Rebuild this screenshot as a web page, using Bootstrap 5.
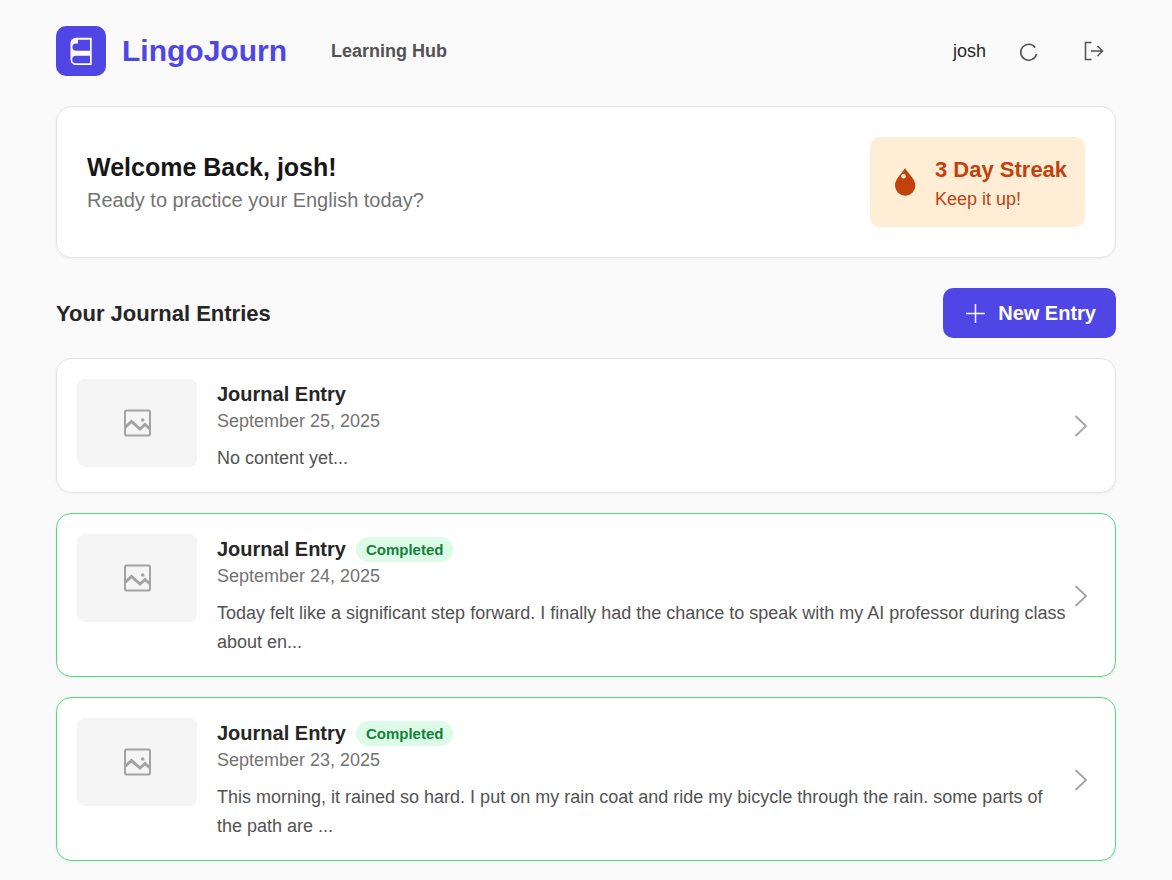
<!DOCTYPE html>
<html lang="en">
<head>
<meta charset="utf-8">
<meta name="viewport" content="width=device-width, initial-scale=1">
<title>LingoJourn</title>
<link href="https://cdn.jsdelivr.net/npm/bootstrap@5.3.0/dist/css/bootstrap.min.css" rel="stylesheet">
<style>
  body { font-family: "Liberation Sans", Arial, sans-serif; background: #fafafa; color: #262626; font-size: 18px; line-height: 25px; }
  a { text-decoration: none; color: inherit; }
  .page { max-width: 1320px; padding: 26px 56px 20px; }
  .site-header { margin-bottom: 30px; }
  .logo-tile { width: 50px; height: 50px; border-radius: 10px; background: #4f46e5; }
  .brand-name { font-size: 30px; line-height: 45px; padding-bottom: 2px; color: #4f46e5; }
  .hub-link { color: #525252; margin-left: 44px; }
  .user-actions { gap: 20px; }
  .icon-btn { width: 45px; height: 45px; padding: 0; border: 0; background: none; color: #525252; }
  .user-link { color: #262626; }
  .user-group { gap: 20px; }
  .panel { background: #fff; border: 1px solid #e5e5e5; border-radius: 15px; box-shadow: 0 1px 3px rgba(0,0,0,.05); }
  .welcome { padding: 30px; margin-bottom: 30px; }
  .welcome-title { font-size: 25px; line-height: 35px; color: #171717; }
  .welcome-text { font-size: 20px; line-height: 30px; color: #737373; }
  .streak { min-width: 215px; background: #ffedd5; color: #c2410c; border-radius: 10px; padding: 15px; gap: 10px; }
  .streak-icon { width: 40px; height: 40px; }
  .streak-title, .section-title { font-size: 22px; line-height: 35px; }
  .new-entry { background: #4f46e5; color: #fff; font-size: 20px; line-height: 30px; padding: 10px 20px; border: 0; border-radius: 10px; gap: 10px; }
  .new-entry:hover { background: #4338ca; color: #fff; }
  .entry-list { gap: 20px; margin-top: 20px; }
  .entry { padding: 20px 27px 19px 20px; }
  .entry.is-done { border-color: #4ade80; }
  .thumb { width: 120px; height: 88px; margin-right: 20px; border-radius: 8px; background: #f5f5f5; color: #a3a3a3; }
  .entry-title { font-size: 20px; line-height: 30px; }
  .done-tag { font-size: 15px; line-height: 19px; padding: 3px 10px; background: #dcfce7; color: #15803d; margin-left: 10px; }
  .entry-date { color: #737373; margin-bottom: 10px; }
  .entry-text { color: #525252; line-height: 29px; }
  .chevron { color: #a3a3a3; margin-left: 5px; }
</style>
</head>
<body>
<svg class="d-none" aria-hidden="true">
  <symbol id="i-image" viewBox="0 0 30 30">
    <rect x="3" y="2.500" width="25" height="25" rx="1.500" fill="none" stroke="currentColor" stroke-width="2"/>
    <path d="M3 19.500 9.500 13.500 18 21 23 16.500 28 21" fill="none" stroke="currentColor" stroke-width="3"/>
    <circle cx="20.700" cy="12" r="1.800" fill="currentColor"/>
  </symbol>
  <symbol id="i-chevron" viewBox="0 0 14 30">
    <path d="M1.500 5 12 15 1.500 25" fill="none" stroke="currentColor" stroke-width="1.800"/>
  </symbol>
</svg>
<div class="page container-fluid">
  <header class="site-header d-flex align-items-center justify-content-between">
    <nav class="d-flex align-items-center" aria-label="Main">
      <a href="#" class="d-flex align-items-center gap-3">
        <span class="logo-tile d-flex align-items-center justify-content-center">
          <svg width="34" height="36" viewBox="0 0 34 36" aria-hidden="true">
            <path fill="#fff" fill-rule="evenodd" d="M12 4.700H27.700V32H12a5.500 5.500 0 0 1-5.500-5.500V10.200A5.500 5.500 0 0 1 12 4.700ZM14 6.700V10.500H12A3.600 3.600 0 0 0 12 17.700H26V6.700ZM12 22.700A3.800 3.800 0 0 0 12 30.300H26V22.700Z"/>
          </svg>
        </span>
        <span class="brand-name fw-bold">LingoJourn</span>
      </a>
      <a href="#" class="hub-link fw-bold">Learning Hub</a>
    </nav>
    <div class="user-actions d-flex align-items-center">
      <a href="#" class="user-link">josh</a>
      <div class="user-group d-flex align-items-center">
        <button type="button" class="icon-btn d-flex align-items-center justify-content-center" aria-label="Refresh">
          <svg width="24" height="24" viewBox="0 0 24 24" fill="none" stroke="currentColor" stroke-width="1.500"><path d="M18.200 8.500A8 8 0 1 0 19.500 15"/></svg>
        </button>
        <button type="button" class="icon-btn d-flex align-items-center justify-content-center" aria-label="Sign out">
          <svg width="24" height="24" viewBox="0 0 24 24" fill="none" stroke="currentColor" stroke-width="1.500"><path d="M9.500 3.500H3.500V20.500H9.500M9 12H20.500M15.500 7 20.500 12 15.500 17"/></svg>
        </button>
      </div>
    </div>
  </header>

  <main>
    <section class="panel welcome d-flex align-items-center justify-content-between">
      <div>
        <h1 class="welcome-title fw-bold mb-0">Welcome Back, josh!</h1>
        <p class="welcome-text mb-0">Ready to practice your English today?</p>
      </div>
      <div class="streak d-flex align-items-center">
        <svg class="streak-icon" viewBox="0 0 40 40" aria-hidden="true">
          <path d="M20 6C17.500 11 10 16.500 10 23.500a10.200 10.200 0 0 0 20.400 0C30.400 16.500 22.500 11 20 6Z" fill="currentColor"/>
          <circle cx="18.500" cy="14.200" r="2.300" fill="#ffedd5"/>
        </svg>
        <div>
          <div class="streak-title fw-bold">3 Day Streak</div>
          <div>Keep it up!</div>
        </div>
      </div>
    </section>

    <div class="d-flex align-items-center justify-content-between">
      <h2 class="section-title fw-bold mb-0">Your Journal Entries</h2>
      <button type="button" class="new-entry btn fw-bold d-flex align-items-center">
        <svg width="25" height="25" viewBox="0 0 25 25" stroke="currentColor" stroke-width="1.500" aria-hidden="true"><path d="M12.500 3V22M3 12.500H22"/></svg>
        New Entry
      </button>
    </div>

    <div class="entry-list d-flex flex-column">
      <a href="#" class="panel entry d-flex">
        <span class="thumb flex-shrink-0 d-flex align-items-center justify-content-center"><svg width="30" height="30"><use href="#i-image"/></svg></span>
        <div class="flex-grow-1">
          <h3 class="entry-title fw-bold mb-0">Journal Entry</h3>
          <div class="entry-date">September 25, 2025</div>
          <p class="entry-text mb-0">No content yet...</p>
        </div>
        <svg class="chevron flex-shrink-0 align-self-center" width="14" height="30"><use href="#i-chevron"/></svg>
      </a>
      <a href="#" class="panel entry is-done d-flex">
        <span class="thumb flex-shrink-0 d-flex align-items-center justify-content-center"><svg width="30" height="30"><use href="#i-image"/></svg></span>
        <div class="flex-grow-1">
          <div class="d-flex align-items-center">
            <h3 class="entry-title fw-bold mb-0">Journal Entry</h3>
            <span class="done-tag fw-bold rounded-pill">Completed</span>
          </div>
          <div class="entry-date">September 24, 2025</div>
          <p class="entry-text mb-0">Today felt like a significant step forward. I finally had the chance to speak with my AI professor during class about en...</p>
        </div>
        <svg class="chevron flex-shrink-0 align-self-center" width="14" height="30"><use href="#i-chevron"/></svg>
      </a>
      <a href="#" class="panel entry is-done d-flex">
        <span class="thumb flex-shrink-0 d-flex align-items-center justify-content-center"><svg width="30" height="30"><use href="#i-image"/></svg></span>
        <div class="flex-grow-1">
          <div class="d-flex align-items-center">
            <h3 class="entry-title fw-bold mb-0">Journal Entry</h3>
            <span class="done-tag fw-bold rounded-pill">Completed</span>
          </div>
          <div class="entry-date">September 23, 2025</div>
          <p class="entry-text mb-0">This morning, it rained so hard. I put on my rain coat and ride my bicycle through the rain. some parts of the path are ...</p>
        </div>
        <svg class="chevron flex-shrink-0 align-self-center" width="14" height="30"><use href="#i-chevron"/></svg>
      </a>
    </div>
  </main>
</div>
<script src="https://cdn.jsdelivr.net/npm/bootstrap@5.3.0/dist/js/bootstrap.bundle.min.js"></script>
</body>
</html>
